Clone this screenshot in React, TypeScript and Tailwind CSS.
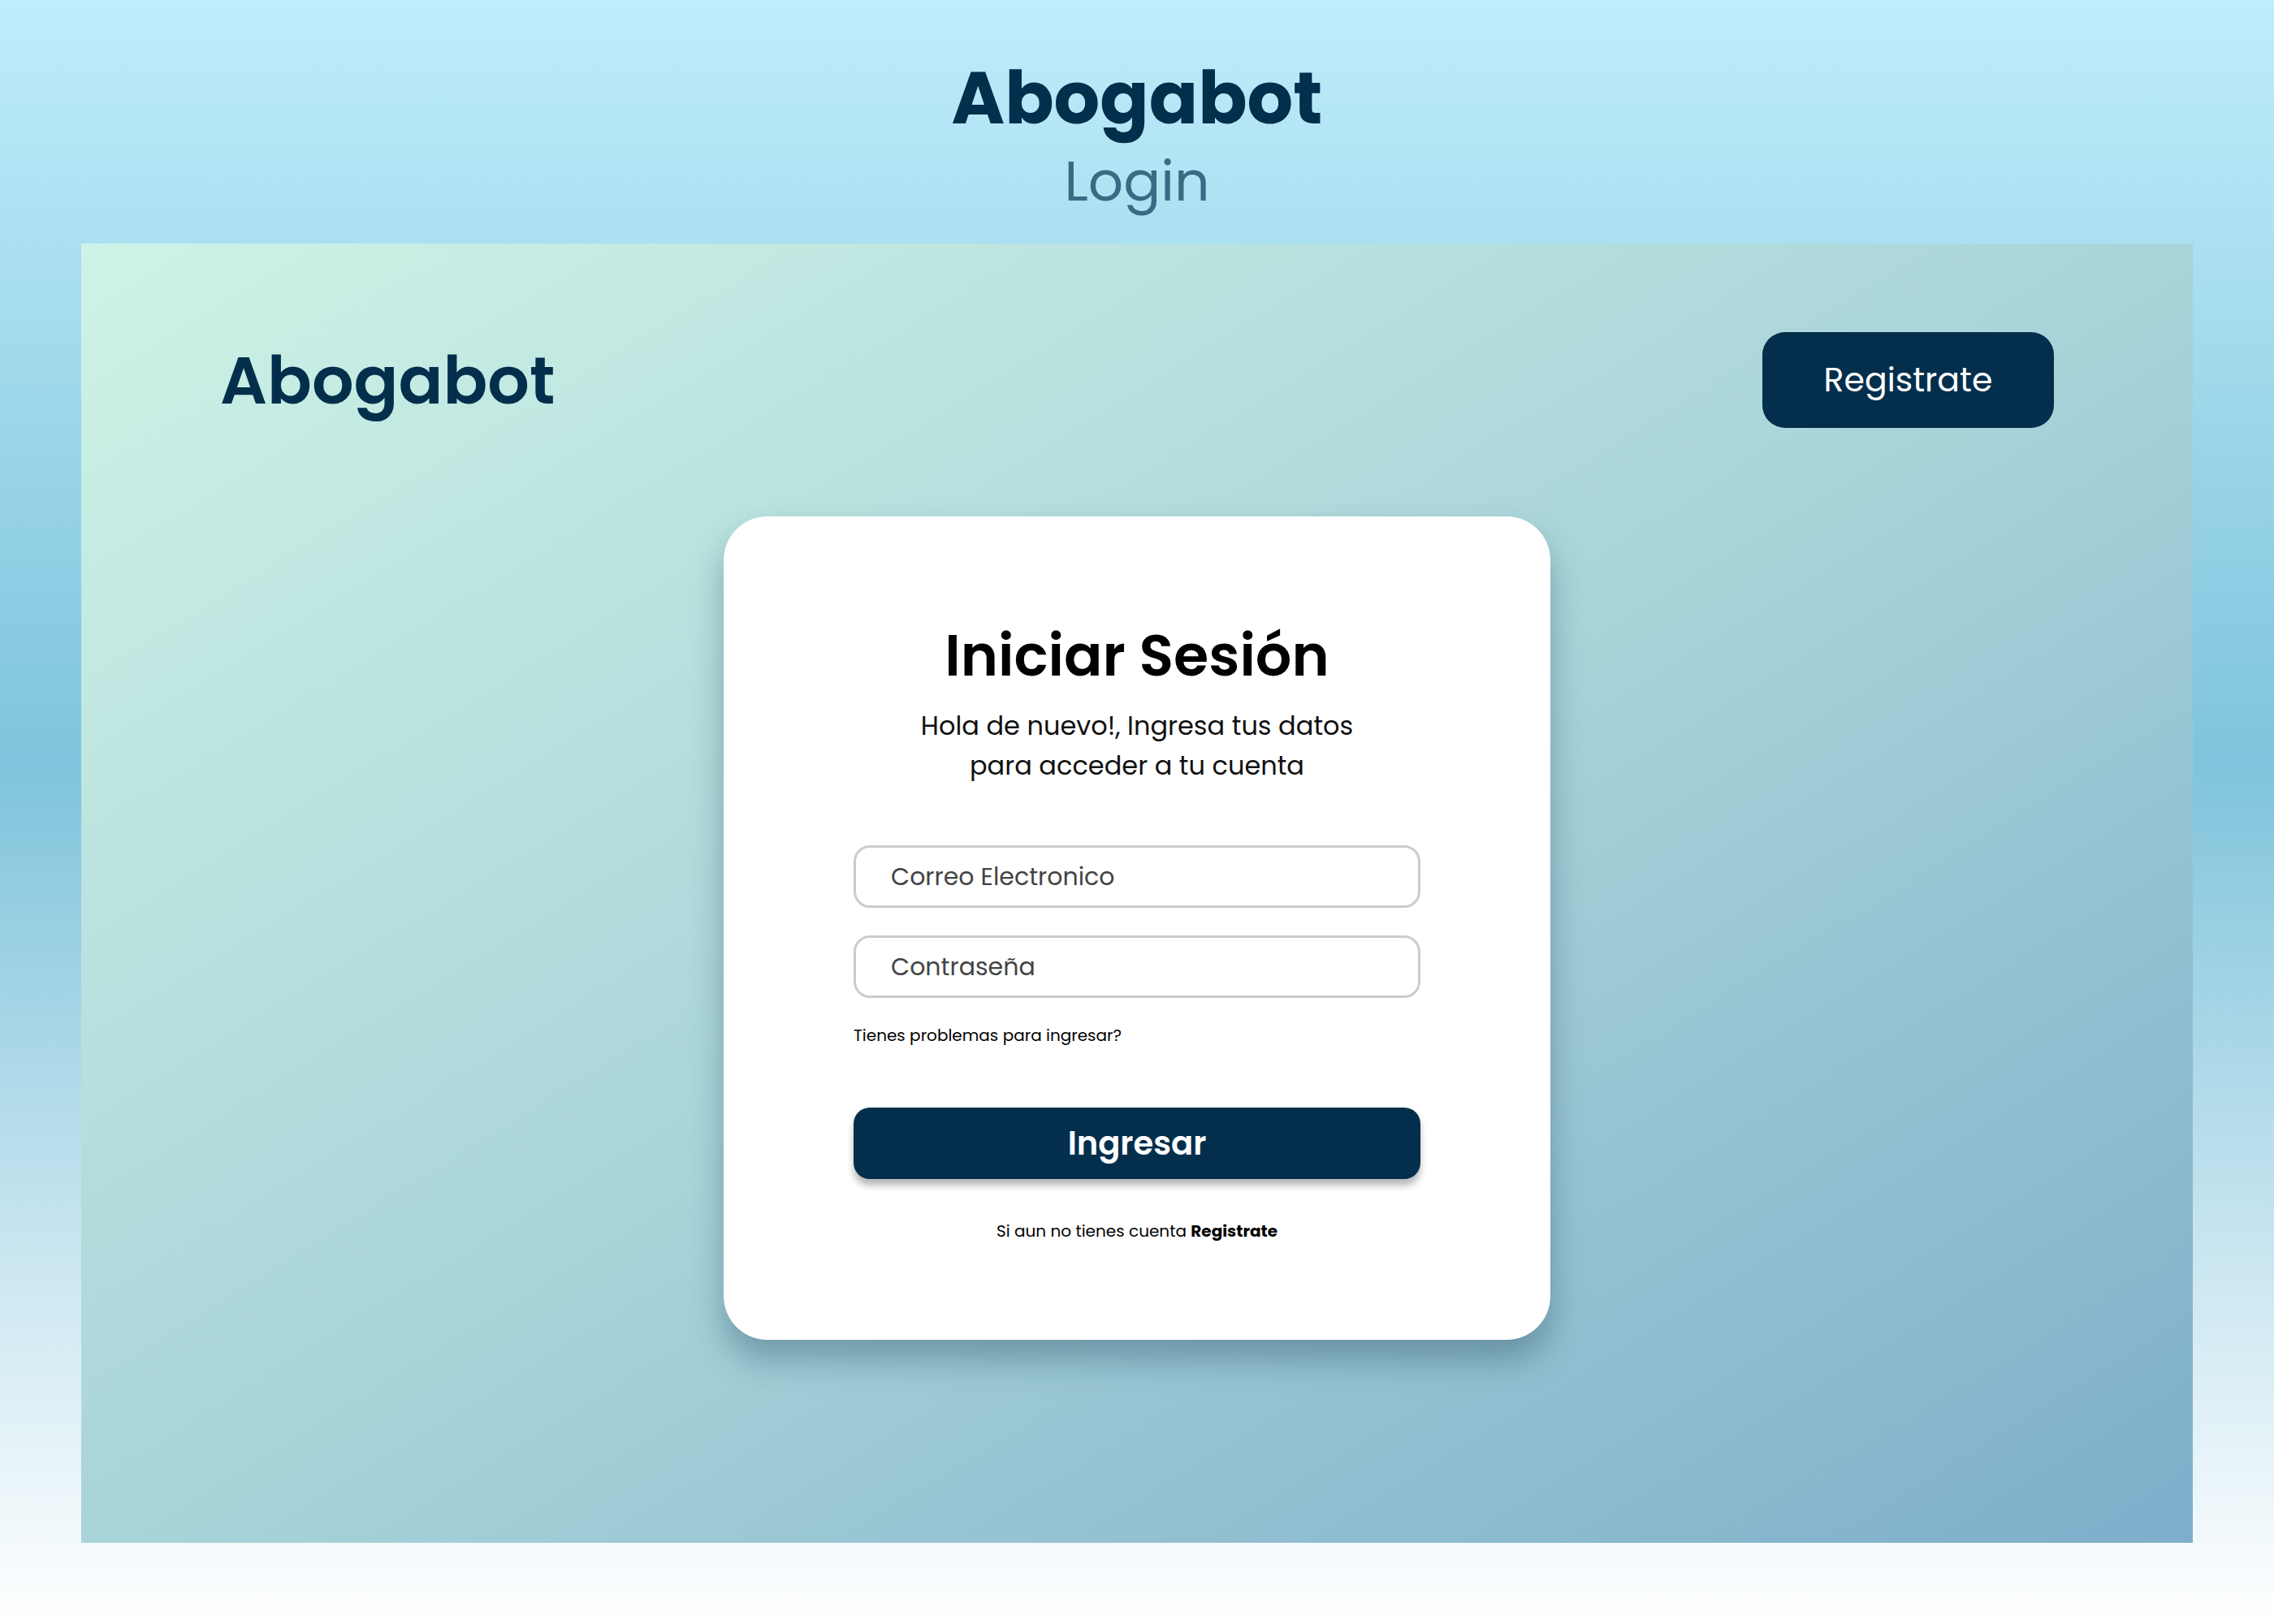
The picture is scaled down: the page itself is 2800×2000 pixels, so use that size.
import React from 'react';

const font = { fontFamily: 'Poppins, Inter, "Noto Sans", sans-serif' };

const Field = ({ placeholder, type }: { placeholder: string; type: string }) => (
	<input
		type={type}
		placeholder={placeholder}
		className="w-full h-[77px] rounded-[20px] border-[3px] border-[#cccccc] bg-white px-[43px] text-[30px] text-[#444] placeholder:text-[#444] outline-none"
	/>
);

export default function App() {
	return (
		<div
			style={font}
			className="w-full min-h-screen h-[2000px] flex flex-col items-center bg-gradient-to-b from-[#bfedfb] via-[#7fc4dc] via-47% to-white"
		>
			<h1 className="pt-[77px] text-[89px] leading-none font-bold text-[#032e4c]">Abogabot</h1>
			<h2 className="mt-[24px] text-[68px] leading-none text-[#3a6a84]">Login</h2>

			<main className="mt-[42px] w-[2600px] h-[1600px] flex flex-col items-center bg-gradient-to-br from-[#cef3e6] via-[#a9d4d9] to-[#7eaeca]">
				<header className="w-full flex items-center justify-between pt-[109px] px-[171px]">
					<span className="text-[81px] leading-none font-semibold text-[#032e4c]">Abogabot</span>
					<button className="w-[359px] h-[118px] rounded-[28px] bg-[#032f4d] text-white text-[41px]">
						Registrate
					</button>
				</header>

				<div className="mt-[109px] w-[1018px] h-[1014px] rounded-[54px] bg-white shadow-[0_24px_40px_rgba(20,60,80,0.35)] flex flex-col items-center">
					<h3 className="pt-[137px] text-[70px] leading-none font-semibold text-black">Iniciar Sesión</h3>
					<p className="mt-[26px] text-[32px] leading-[49px] text-center text-[#111]">
						Hola de nuevo!, Ingresa tus datos
						<br />
						para acceder a tu cuenta
					</p>

					<form className="mt-[74px] w-[698px] flex flex-col">
						<Field placeholder="Correo Electronico" type="email" />
						<div className="mt-[34px]">
							<Field placeholder="Contraseña" type="password" />
						</div>
						<a className="mt-[34px] text-[20px] leading-[24px] text-black">Tienes problemas para ingresar?</a>
						<button
							type="button"
							className="mt-[77px] h-[88px] w-full rounded-[20px] bg-[#032f4d] text-white text-[40px] font-semibold shadow-[0_8px_8px_rgba(0,0,0,0.28)]"
						>
							Ingresar
						</button>
					</form>

					<p className="mt-[52px] text-[20px] leading-[24px] text-black">
						Si aun no tienes cuenta <span className="font-bold">Registrate</span>
					</p>
				</div>
			</main>
		</div>
	);
}
